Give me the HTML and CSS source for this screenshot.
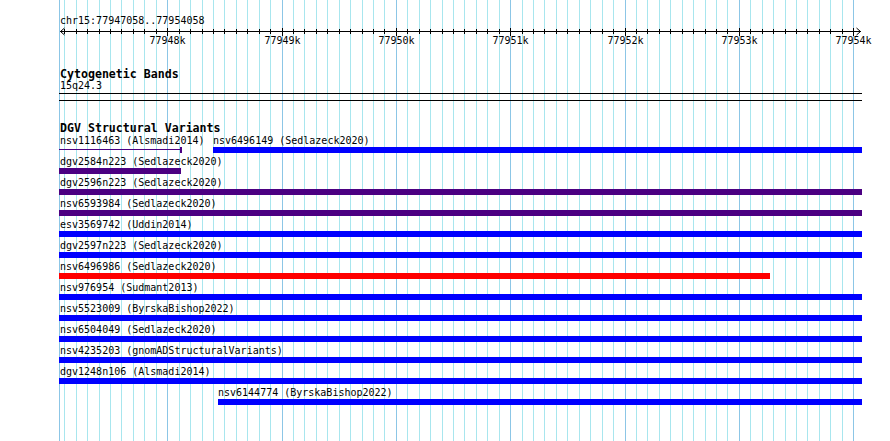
FILE: index.html
```html
<!DOCTYPE html>
<html lang="en">
<head>
    <meta charset="UTF-8">
    <meta name="viewport" content="width=device-width, initial-scale=1.0">
    <title>chr15:77947058..77954058</title>
    <link rel="stylesheet" href="styles.css">
</head>
<body>
    <div class="panel">
        <svg class="grid" width="890" height="441"></svg>

        <div class="ruler">
            <div class="ruler-name">chr15:77947058..77954058</div>
            <svg class="scale" width="890" height="20">
                <line x1="60" y1="4.5" x2="861" y2="4.5"></line>
                <polyline points="64.5,1 60.5,4.5 64.5,8"></polyline>
                <polyline points="856.5,1 860.5,4.5 856.5,8"></polyline>
            </svg>
        </div>

        <div class="track">
            <div class="track-title">Cytogenetic Bands</div>
            <div class="band-name">15q24.3</div>
            <div class="band"></div>
        </div>

        <div class="track">
            <div class="track-title">DGV Structural Variants</div>
            <div class="rows">
                <div class="row">
                    <div class="feat clip" style="left:0;width:123px">
                        <div class="feat-name">nsv1116463 (Alsmadi2014)</div>
                        <div class="feat-line"></div>
                    </div>
                    <div class="feat" style="left:154px;width:649px">
                        <div class="feat-name">nsv6496149 (Sedlazeck2020)</div>
                        <div class="bar blue"></div>
                    </div>
                </div>
                <div class="row">
                    <div class="feat clip" style="left:0;width:122px">
                        <div class="feat-name">dgv2584n223 (Sedlazeck2020)</div>
                        <div class="bar indigo"></div>
                    </div>
                </div>
                <div class="row">
                    <div class="feat clip" style="left:0;width:803px">
                        <div class="feat-name">dgv2596n223 (Sedlazeck2020)</div>
                        <div class="bar indigo"></div>
                    </div>
                </div>
                <div class="row">
                    <div class="feat clip" style="left:0;width:803px">
                        <div class="feat-name">nsv6593984 (Sedlazeck2020)</div>
                        <div class="bar indigo"></div>
                    </div>
                </div>
                <div class="row">
                    <div class="feat clip" style="left:0;width:803px">
                        <div class="feat-name">esv3569742 (Uddin2014)</div>
                        <div class="bar blue"></div>
                    </div>
                </div>
                <div class="row">
                    <div class="feat clip" style="left:0;width:803px">
                        <div class="feat-name">dgv2597n223 (Sedlazeck2020)</div>
                        <div class="bar blue"></div>
                    </div>
                </div>
                <div class="row">
                    <div class="feat clip" style="left:0;width:711px">
                        <div class="feat-name">nsv6496986 (Sedlazeck2020)</div>
                        <div class="bar red"></div>
                    </div>
                </div>
                <div class="row">
                    <div class="feat clip" style="left:0;width:803px">
                        <div class="feat-name">nsv976954 (Sudmant2013)</div>
                        <div class="bar blue"></div>
                    </div>
                </div>
                <div class="row">
                    <div class="feat clip" style="left:0;width:803px">
                        <div class="feat-name">nsv5523009 (ByrskaBishop2022)</div>
                        <div class="bar blue"></div>
                    </div>
                </div>
                <div class="row">
                    <div class="feat clip" style="left:0;width:803px">
                        <div class="feat-name">nsv6504049 (Sedlazeck2020)</div>
                        <div class="bar blue"></div>
                    </div>
                </div>
                <div class="row">
                    <div class="feat clip" style="left:0;width:803px">
                        <div class="feat-name">nsv4235203 (gnomADStructuralVariants)</div>
                        <div class="bar blue"></div>
                    </div>
                </div>
                <div class="row">
                    <div class="feat clip" style="left:0;width:803px">
                        <div class="feat-name">dgv1248n106 (Alsmadi2014)</div>
                        <div class="bar blue"></div>
                    </div>
                </div>
                <div class="row">
                    <div class="feat" style="left:159px;width:644px">
                        <div class="feat-name">nsv6144774 (ByrskaBishop2022)</div>
                        <div class="bar blue"></div>
                    </div>
                </div>
            </div>
        </div>
    </div>
    <script type="text/javascript">
        // grid lines + ruler ticks, one every 100 bp
        const NS = "http://www.w3.org/2000/svg"
        const grid = document.querySelector(".grid")
        const scale = document.querySelector(".scale")

        add = (parent, tag, attrs, text)=>{
            let node = document.createElementNS(NS, tag)
            for (let k in attrs) node.setAttribute(k, attrs[k])
            if (text) node.textContent = text
            parent.appendChild(node)
        }

        tickX = (k)=>{
            return Math.floor(53.4 + 11.432 * k) + 0.5
        }

        add(grid, "line", {x1:59.5, y1:0, x2:59.5, y2:441, class:"major"})
        for (let k = 1; k <= 70; k++) {
            let x = tickX(k)
            let major = k % 10 == 0
            add(grid, "line", {x1:x, y1:0, x2:x, y2:441, class: major ? "major" : "minor"})
            add(scale, "line", {x1:x, y1: major ? 1 : 2, x2:x, y2: major ? 9 : 7})
            if (major) add(scale, "text", {x:x, y:17}, (77947 + k / 10) + "k")
        }
    </script>
</body>
</html>
```

FILE: styles.css
```css
* {
    margin:0; padding:0; border:0;
    box-sizing: border-box;
}
html, body { height:100%; }
body {
    background: #fff;
    color: #000;
    font-family: "DejaVu Sans Mono", "Liberation Mono", monospace;
    font-size: 10px;
    line-height: 12px;
}
.panel {
    position: relative;
    z-index: 0;
    width: 890px;
    height: 441px;
    padding-top: 15px;
    overflow: hidden;
}
.grid {
    position: absolute;
    left: 0; top: 0;
    z-index: -1;
}
.grid line { shape-rendering: crispEdges; stroke-width: 1; }
.grid .minor { stroke: #a8e6ee; }
.grid .major { stroke: #8cc6e6; }

.ruler-name { padding-left: 60px; }
.scale { display: block; }
.scale line { stroke: #000; stroke-width: 1; shape-rendering: crispEdges; }
.scale polyline { stroke: #000; stroke-width: 1; fill: none; }
.scale text {
    font: 10px "DejaVu Sans Mono", "Liberation Mono", monospace;
    text-anchor: middle;
    fill: #000;
}

.track { margin-top: 21px; }
.track-title {
    padding-left: 60px;
    font-weight: bold;
    font-size: 11.6px;
    line-height: 12px;
}
.band-name { padding-left: 60px; }
.band {
    width: 803px;
    height: 8px;
    margin: 1px 0 0 59px;
    border-top: 1px solid #000;
    border-bottom: 1px solid #000;
}

.rows { margin: 1px 0 0 59px; }
.row {
    position: relative;
    height: 21px;
}
.feat {
    position: absolute;
    top: 0;
}
.feat-name {
    height: 12px;
    white-space: nowrap;
}
.feat.clip .feat-name { padding-left: 1px; }
.bar { height: 6px; }
.blue { background: #0000ff; }
.indigo { background: #4b0082; }
.red { background: #ff0000; }

.feat-line {
    position: relative;
    height: 6px;
}
.feat-line::before {
    content: "";
    position: absolute;
    left: 0; right: 0; top: 2px;
    height: 1px;
    background: #4b0082;
}
.feat-line::after {
    content: "";
    position: absolute;
    right: 0; top: 0;
    width: 2px;
    height: 6px;
    background: #4b0082;
}
```
